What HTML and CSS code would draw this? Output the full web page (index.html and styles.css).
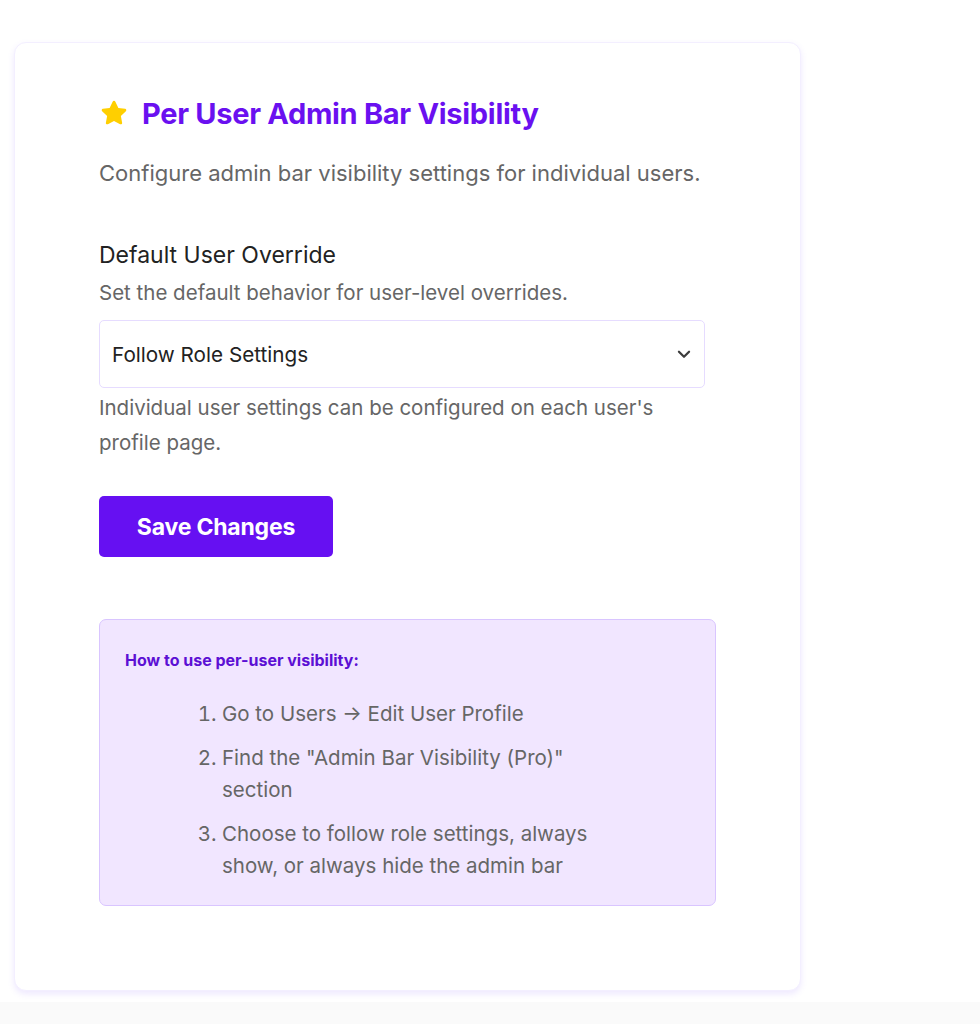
FILE: index.html
```html
<!DOCTYPE html>
<html>
<head>
<meta charset="utf-8">
<link rel="stylesheet" href="styles.css">
</head>
<body>
<div class="page">
  <div class="card">
    <h2 class="title">
      <svg class="star" width="30" height="30" viewBox="0 0 24 24"><path d="M12 2.2c.5 0 .9.3 1.1.7l2.4 5 5.4.7c.9.1 1.3 1.3.6 1.9l-4 3.8 1 5.4c.2.9-.8 1.6-1.6 1.2L12 18.3l-4.9 2.6c-.8.4-1.8-.3-1.6-1.2l1-5.4-4-3.8c-.7-.6-.3-1.8.6-1.9l5.4-.7 2.4-5c.2-.4.6-.7 1.1-.7z" fill="#ffcf00"/></svg>
      <span>Per User Admin Bar Visibility</span>
    </h2>
    <p class="desc">Configure admin bar visibility settings for individual users.</p>

    <div class="field">
      <div class="label">Default User Override</div>
      <div class="sub">Set the default behavior for user-level overrides.</div>
      <div class="select">
        <span>Follow Role Settings</span>
        <svg width="18" height="18" viewBox="0 0 16 16"><path d="M3.5 6l4.5 4.5 4.5-4.5" fill="none" stroke="#3c3c3c" stroke-width="2" stroke-linecap="round" stroke-linejoin="round"/></svg>
      </div>
      <p class="help">Individual user settings can be configured on each user's profile page.</p>
    </div>

    <button class="btn">Save Changes</button>

    <div class="info">
      <div class="info-title">How to use per-user visibility:</div>
      <ol class="steps">
        <li>Go to Users → Edit User Profile</li>
        <li>Find the "Admin Bar Visibility (Pro)" section</li>
        <li>Choose to follow role settings, always show, or always hide the admin bar</li>
      </ol>
    </div>
  </div>
</div>
<div class="footer"></div>
</body>
</html>
```
FILE: styles.css
```css
html, body {
  margin: 0;
  padding: 0;
  background: #ffffff;
  font-family: Inter, "Noto Sans", "Liberation Sans", sans-serif;
}
.page {
  padding: 42px 0 0 14px;
}
.card {
  width: 787px;
  height: 949px;
  box-sizing: border-box;
  background: #fff;
  border: 1px solid #f3efff;
  border-radius: 12px;
  box-shadow: 0 3px 6px rgba(150, 110, 255, 0.16);
  padding: 50px 84px 0 84px;
}
.title {
  display: flex;
  align-items: center;
  gap: 13px;
  margin: 0;
  font-size: 29px;
  font-weight: 700;
  color: #6a10f0;
  letter-spacing: -0.3px;
  height: 40px;
}
.star {
  flex: none;
}
.desc {
  margin: 25px 0 0 0;
  font-size: 22px;
  color: #666666;
  line-height: 30px;
}
.field {
  margin-top: 52px;
  width: 606px;
}
.label {
  font-size: 23px;
  color: #222222;
  line-height: 30px;
}
.sub {
  margin-top: 10px;
  font-size: 20.5px;
  color: #666666;
  line-height: 26px;
}
.select {
  margin-top: 14px;
  height: 68px;
  box-sizing: border-box;
  border: 1px solid #e6dcff;
  border-radius: 5px;
  display: flex;
  align-items: center;
  justify-content: space-between;
  padding: 0 11px 0 12px;
  font-size: 20.7px;
  color: #222222;
}
.help {
  margin: 2px 0 0 0;
  font-size: 20.5px;
  color: #666666;
  line-height: 35px;
}
.btn {
  margin-top: 36px;
  width: 234px;
  height: 61px;
  border: none;
  border-radius: 5px;
  background: #6610f2;
  color: #ffffff;
  font-family: inherit;
  font-size: 23px;
  font-weight: 700;
  letter-spacing: -0.2px;
  display: block;
}
.info {
  margin-top: 62px;
  width: 617px;
  height: 287px;
  box-sizing: border-box;
  background: #f1e6ff;
  border: 1px solid #d9c5ff;
  border-radius: 7px;
  padding: 27px 25px 0 25px;
}
.info-title {
  font-size: 16px;
  font-weight: 700;
  color: #5c10d4;
  line-height: 26px;
}
.steps {
  margin: 25px 0 0 0;
  padding: 0 0 0 97px;
  width: 395px;
  font-size: 20.5px;
  color: #666666;
  line-height: 32px;
}
.steps li {
  margin-bottom: 12px;
}
.footer {
  height: 22px;
  margin-top: 11px;
  background: #fafafa;
}
```
